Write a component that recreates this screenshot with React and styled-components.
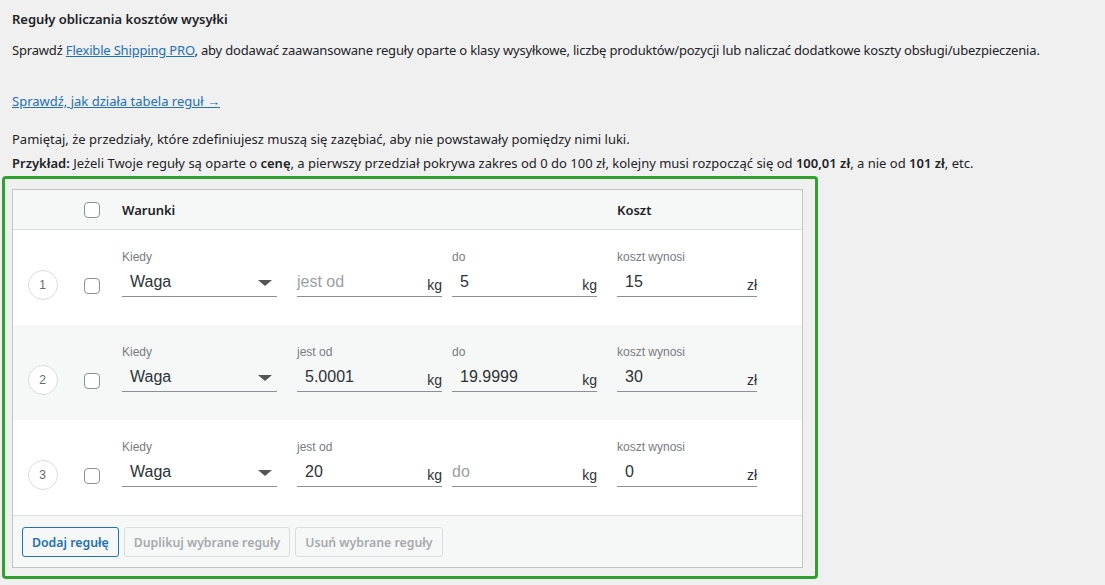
import React from 'react';
import styled, { createGlobalStyle } from 'styled-components';

const GlobalStyle = createGlobalStyle`
  html, body {
    margin: 0;
    padding: 0;
    background: #f0f0f1;
  }
  body {
    font-family: "Noto Sans", "Open Sans", sans-serif;
    font-size: 13px;
    color: #1d2327;
  }
`;

const rules = [
  { id: 1, from: '', to: '5', cost: '15' },
  { id: 2, from: '5.0001', to: '19.9999', cost: '30' },
  { id: 3, from: '20', to: '', cost: '0' },
];

const Field = ({ label, value, unit, width }) => (
  <FieldBox $width={width}>
    <Label>{value ? label : '\u00a0'}</Label>
    <Line>
      {value ? <Value>{value}</Value> : <Placeholder>{label}</Placeholder>}
      {unit && <Unit>{unit}</Unit>}
    </Line>
  </FieldBox>
);

const App = () => (
  <Page>
    <GlobalStyle />
    <Title>Reguły obliczania kosztów wysyłki</Title>
    <Text $top={11} $tight>
      Sprawdź <Link href="#">Flexible Shipping PRO</Link>, aby dodawać zaawansowane reguły oparte o klasy
      wysyłkowe, liczbę produktów/pozycji lub naliczać dodatkowe koszty obsługi/ubezpieczenia.
    </Text>
    <Text $top={31}>
      <Link href="#">Sprawdź, jak działa tabela reguł →</Link>
    </Text>
    <Text $top={18}>Pamiętaj, że przedziały, które zdefiniujesz muszą się zazębiać, aby nie powstawały pomiędzy nimi luki.</Text>
    <Text $top={4}>
      <b>Przykład:</b> Jeżeli Twoje reguły są oparte o <b>cenę</b>, a pierwszy przedział pokrywa zakres od 0 do 100 zł,
      kolejny musi rozpocząć się od <b>100,01 zł</b>, a nie od <b>101 zł</b>, etc.
    </Text>

    <Highlight>
      <Table>
        <Header>
          <NumCell />
          <CheckCell><Checkbox /></CheckCell>
          <HeadTitle $width={495}>Warunki</HeadTitle>
          <HeadTitle>Koszt</HeadTitle>
        </Header>
        {rules.map((r, i) => (
          <Row key={r.id} $alt={i % 2 === 1}>
            <NumCell><Circle>{r.id}</Circle></NumCell>
            <CheckCell><Checkbox /></CheckCell>
            <FieldBox $width={155}>
              <Label>Kiedy</Label>
              <Line>
                <Value>Waga</Value>
                <Arrow />
              </Line>
            </FieldBox>
            <Gap $w={20} />
            <Field label="jest od" value={r.from} unit="kg" width={145} />
            <Gap $w={10} />
            <Field label="do" value={r.to} unit="kg" width={145} />
            <Gap $w={20} />
            <Field label="koszt wynosi" value={r.cost} unit="zł" width={140} />
          </Row>
        ))}
        <Footer>
          <Button $primary>Dodaj regułę</Button>
          <Button disabled>Duplikuj wybrane reguły</Button>
          <Button disabled>Usuń wybrane reguły</Button>
        </Footer>
      </Table>
    </Highlight>
  </Page>
);

const Page = styled.div`
  padding: 9px 0 0 12px;
  width: 1105px;
  height: 585px;
  box-sizing: border-box;
  overflow: hidden;
`;

const Title = styled.h3`
  margin: 0;
  font-size: 13px;
  line-height: 20px;
  font-weight: 600;
`;

const Text = styled.p`
  margin: ${(p) => p.$top}px 0 0;
  line-height: 20px;
  white-space: nowrap;
  letter-spacing: ${(p) => (p.$tight ? '-0.18px' : '0')};
  b {
    font-weight: 600;
  }
`;

const Link = styled.a`
  color: #2271b1;
  text-decoration: underline;
`;

const Highlight = styled.div`
  margin: 3px 0 0 -10px;
  width: 816px;
  box-sizing: border-box;
  border: 3px solid #2ea12e;
  border-radius: 4px;
  padding: 10px 12px 8px 7px;
`;

const Table = styled.div`
  border: 1px solid #c3c4c7;
  background: #fff;
  font-family: "Liberation Sans", Arial, sans-serif;
`;

const Header = styled.div`
  display: flex;
  align-items: center;
  height: 40px;
  box-sizing: border-box;
  background: #f6f7f7;
  border-bottom: 1px solid #dcdcde;
`;

const HeadTitle = styled.div`
  width: ${(p) => (p.$width ? `${p.$width}px` : 'auto')};
  font-family: "Noto Sans", sans-serif;
  font-size: 13px;
  font-weight: 600;
  color: #1d2327;
`;

const NumCell = styled.div`
  width: 59px;
  display: flex;
  justify-content: center;
`;

const CheckCell = styled.div`
  width: 38px;
  padding-left: 12px;
  display: flex;
`;

const Checkbox = styled.span`
  display: block;
  width: 16px;
  height: 16px;
  box-sizing: border-box;
  border: 1px solid #8c8f94;
  border-radius: 4px;
  background: #fff;
`;

const Row = styled.div`
  display: flex;
  align-items: flex-start;
  height: 95px;
  padding-top: 20px;
  box-sizing: border-box;
  background: ${(p) => (p.$alt ? '#f6f7f7' : '#fff')};
  & > ${CheckCell} {
    padding-top: 28px;
  }
  & > ${NumCell} {
    padding-top: 20px;
  }
`;

const Circle = styled.div`
  width: 30px;
  height: 30px;
  box-sizing: border-box;
  border: 1px solid #dcdcde;
  border-radius: 50%;
  display: flex;
  align-items: center;
  justify-content: center;
  font-size: 12px;
  color: #646970;
  background: #fff;
`;

const Gap = styled.div`
  width: ${(p) => p.$w}px;
`;

const FieldBox = styled.div`
  width: ${(p) => p.$width}px;
  display: flex;
  flex-direction: column;
`;

const Label = styled.div`
  font-size: 12px;
  line-height: 14px;
  color: #787c82;
  height: 14px;
`;

const Line = styled.div`
  display: flex;
  align-items: flex-end;
  height: 33px;
  box-sizing: border-box;
  border-bottom: 1px solid #8c8f94;
`;

const Value = styled.span`
  flex: 1;
  padding-left: 8px;
  font-size: 16px;
  line-height: 22px;
  color: #2c3338;
  margin-bottom: 3px;
`;

const Placeholder = styled(Value)`
  padding-left: 0;
  color: #9a9fa4;
`;

const Unit = styled.span`
  font-size: 14px;
  line-height: 18px;
  margin-bottom: 2px;
  color: #2c3338;
`;

const Arrow = styled.span`
  width: 0;
  height: 0;
  margin: 0 5px 10px 0;
  border-left: 7px solid transparent;
  border-right: 7px solid transparent;
  border-top: 6px solid #555;
`;

const Footer = styled.div`
  display: flex;
  gap: 5px;
  padding: 11px 9px 10px;
  background: #f6f7f7;
  border-top: 1px solid #dcdcde;
`;

const Button = styled.button`
  height: 30px;
  padding: 0 9px;
  font-family: "Noto Sans", sans-serif;
  font-size: 12.3px;
  font-weight: 600;
  border-radius: 3px;
  background: #f6f7f7;
  border: 1px solid ${(p) => (p.$primary ? '#2271b1' : '#dcdcde')};
  color: ${(p) => (p.$primary ? '#2271b1' : '#a7aaad')};
  cursor: pointer;
  &:disabled {
    cursor: default;
  }
`;

export default App;
